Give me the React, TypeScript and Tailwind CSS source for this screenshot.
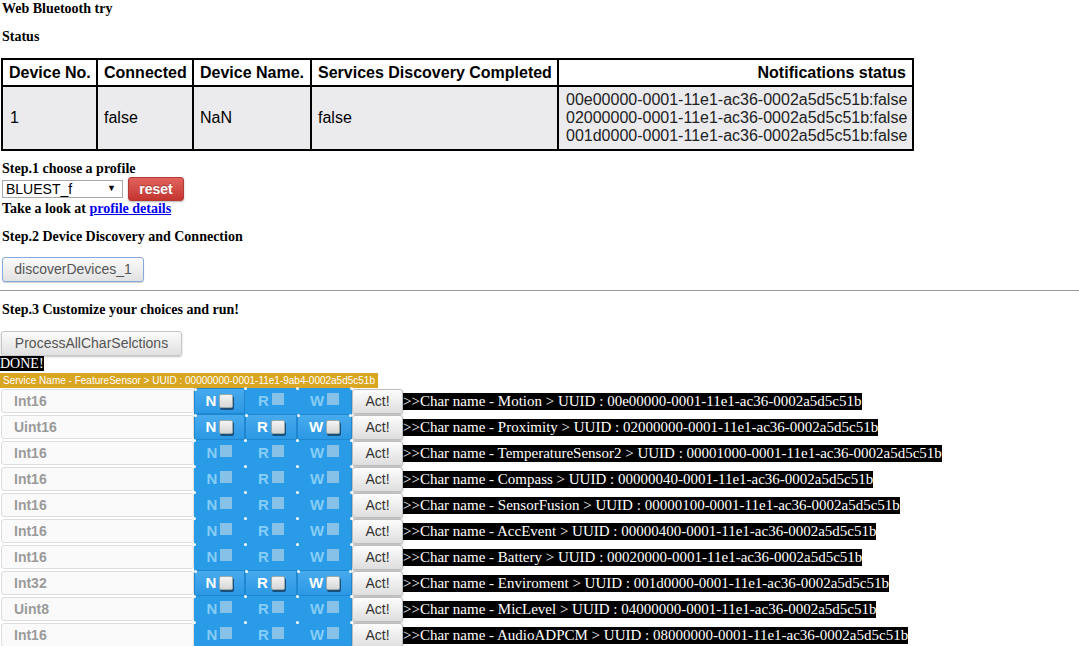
const serif = 'font-["Liberation_Serif",serif]';

const chars = [
  { type: 'Int16', name: 'Motion', uuid: '00e00000-0001-11e1-ac36-0002a5d5c51b', n: true, r: false, w: false },
  { type: 'Uint16', name: 'Proximity', uuid: '02000000-0001-11e1-ac36-0002a5d5c51b', n: true, r: true, w: true },
  { type: 'Int16', name: 'TemperatureSensor2', uuid: '00001000-0001-11e1-ac36-0002a5d5c51b', n: false, r: false, w: false },
  { type: 'Int16', name: 'Compass', uuid: '00000040-0001-11e1-ac36-0002a5d5c51b', n: false, r: false, w: false },
  { type: 'Int16', name: 'SensorFusion', uuid: '00000100-0001-11e1-ac36-0002a5d5c51b', n: false, r: false, w: false },
  { type: 'Int16', name: 'AccEvent', uuid: '00000400-0001-11e1-ac36-0002a5d5c51b', n: false, r: false, w: false },
  { type: 'Int16', name: 'Battery', uuid: '00020000-0001-11e1-ac36-0002a5d5c51b', n: false, r: false, w: false },
  { type: 'Int32', name: 'Enviroment', uuid: '001d0000-0001-11e1-ac36-0002a5d5c51b', n: true, r: true, w: true },
  { type: 'Uint8', name: 'MicLevel', uuid: '04000000-0001-11e1-ac36-0002a5d5c51b', n: false, r: false, w: false },
  { type: 'Int16', name: 'AudioADPCM', uuid: '08000000-0001-11e1-ac36-0002a5d5c51b', n: false, r: false, w: false },
];

function Toggle({ label, on, width, last }: { label: string; on: boolean; width: string; last?: boolean }) {
  return (
    <div
      className={
        'relative flex h-full items-center justify-center gap-[3px] ' +
        width +
        (on ? ' bg-gradient-to-b from-[#47aaee] to-[#2b98e4] border border-[#1f86d0]' : '')
      }
    >
      <span className="absolute -left-px -top-px h-[3px] w-[3px] rounded-full bg-white" />
      {last && <span className="absolute -right-px -top-px h-[3px] w-[3px] rounded-full bg-white" />}
      <span className={'text-[15px] font-bold ' + (on ? 'text-white' : 'text-[#86cdf7]')}>{label}</span>
      {on ? (
        <span className="h-[14px] w-[14px] rounded-[2px] border border-[#9aa] bg-gradient-to-b from-[#f4f4f4] to-[#d6d6d6] shadow-[1px_2px_0_#1b4f7a]" />
      ) : (
        <span className="mb-[4px] h-[12px] w-[12px] bg-[#86c1e8]" />
      )}
    </div>
  );
}

export default function App() {
  return (
    <div className="h-[646px] overflow-hidden bg-white text-black">
      <div className={`${serif} h-[18px] pl-[2px] text-[14px] font-bold leading-[18px]`}>Web Bluetooth try</div>
      <div className={`${serif} mt-[10px] h-[18px] pl-[2px] text-[14px] font-bold leading-[18px]`}>Status</div>

      <table className='mt-[12px] ml-px w-[913px] table-fixed border-collapse whitespace-nowrap font-["Liberation_Sans",sans-serif] text-[16px]'>
        <thead>
          <tr className="h-[27px]">
            <th className="w-[95px] border-2 border-black px-[6px] text-left font-bold">Device No.</th>
            <th className="w-[96px] border-2 border-black px-[6px] text-left font-bold">Connected</th>
            <th className="w-[118px] border-2 border-black px-[6px] text-left font-bold">Device Name.</th>
            <th className="w-[247px] border-2 border-black px-[6px] text-left font-bold">Services Discovery Completed</th>
            <th className="border-2 border-black px-[6px] text-right font-bold">Notifications status</th>
          </tr>
        </thead>
        <tbody>
          <tr className="h-[64px] bg-[#ebebee]">
            <td className="border-2 border-black px-[7px]">1</td>
            <td className="border-2 border-black px-[6px]">false</td>
            <td className="border-2 border-black px-[6px]">NaN</td>
            <td className="border-2 border-black px-[6px]">false</td>
            <td className="border-2 border-black px-[7px] leading-[18px] text-[#222]">
              <div>00e00000-0001-11e1-ac36-0002a5d5c51b:false</div>
              <div>02000000-0001-11e1-ac36-0002a5d5c51b:false</div>
              <div>001d0000-0001-11e1-ac36-0002a5d5c51b:false</div>
            </td>
          </tr>
        </tbody>
      </table>

      <div className={`${serif} mt-[10px] h-[16px] pl-[2px] text-[14px] font-bold leading-[16px]`}>Step.1 choose a profile</div>
      <div className="flex h-[24px] items-center pl-[2px] font-['Liberation_Sans',sans-serif]">
        <div className="flex h-[18px] w-[121px] items-center justify-between border border-[#a9a9a9] pl-[3px] pr-[6px] text-[14px]">
          <span>BLUEST_f</span>
          <span className="text-[9px]">▼</span>
        </div>
        <button className="ml-[5px] h-[24px] w-[56px] rounded-[3px] border border-[#b53a36] bg-gradient-to-b from-[#e2625e] to-[#c4342f] text-[14px] font-bold text-white [text-shadow:0_-1px_0_rgba(0,0,0,0.3)] shadow-[0_1px_2px_rgba(0,0,0,0.3)]">
          reset
        </button>
      </div>
      <div className={`${serif} h-[16px] pl-[2px] text-[14px] font-bold leading-[16px]`}>
        Take a look at <a href="#" className="text-[#0000ee] underline">profile details</a>
      </div>

      <div className={`${serif} mt-[12px] h-[16px] pl-[2px] text-[14px] font-bold leading-[16px]`}>Step.2 Device Discovery and Connection</div>
      <button className="mt-[12px] ml-[2px] h-[25px] w-[142px] rounded-[3px] border border-[#86a9dd] bg-gradient-to-b from-[#fbfbfb] to-[#e2e2e2] font-['Liberation_Sans',sans-serif] text-[14px] text-[#555] shadow-[0_1px_1px_rgba(0,0,0,0.2)]">
        discoverDevices_1
      </button>
      <hr className="mt-[8px] border-t border-[#9a9a9a]" />

      <div className={`${serif} mt-[11px] h-[16px] pl-[2px] text-[14px] font-bold leading-[16px]`}>Step.3 Customize your choices and run!</div>
      <button className="mt-[13px] ml-px h-[25px] w-[181px] rounded-[3px] border border-[#c8c8c8] bg-gradient-to-b from-[#fbfbfb] to-[#e0e0e0] font-['Liberation_Sans',sans-serif] text-[14px] text-[#555] shadow-[0_1px_2px_rgba(0,0,0,0.25)]">
        ProcessAllCharSelctions
      </button>
      <div className={`${serif} h-[15px] text-[14px] leading-[15px]`}>
        <span className="bg-black text-white">DONE!</span>
      </div>
      <div className="mt-[2px] h-[15px] w-[378px] overflow-hidden whitespace-nowrap bg-[#daa520] pl-[3px] font-['Liberation_Sans',sans-serif] text-[10px] leading-[15px] text-white">
        Service Name - FeatureSensor &gt; UUID : 00000000-0001-11e1-9ab4-0002a5d5c51b
      </div>

      <div className="font-['Liberation_Sans',sans-serif]">
        {chars.map((c, i) => (
          <div key={i} className="flex h-[26px] items-center whitespace-nowrap">
            <div className="ml-px flex h-[24px] w-[193px] items-center rounded-[3px] border border-[#dedede] bg-[#fafafa] pl-[12px] text-[14px] font-bold text-[#9a9a9a]">
              {c.type}
            </div>
            <div className="flex h-full w-[158px] bg-[#2a9be6]">
              <Toggle label="N" on={c.n} width="w-[51px]" />
              <Toggle label="R" on={c.r} width="w-[52px]" />
              <Toggle label="W" on={c.w} width="w-[55px]" last />
            </div>
            <button className="h-[25px] w-[51px] rounded-[3px] border border-[#bdbdbd] bg-gradient-to-b from-[#fdfdfd] to-[#dedede] text-[14px] text-[#333] shadow-[0_1px_2px_rgba(0,0,0,0.3)]">
              Act!
            </button>
            <span className={`${serif} bg-black text-[15px] leading-[17px] text-white`}>
              &gt;&gt;Char name - {c.name} &gt; UUID : {c.uuid}
            </span>
          </div>
        ))}
      </div>
    </div>
  );
}
